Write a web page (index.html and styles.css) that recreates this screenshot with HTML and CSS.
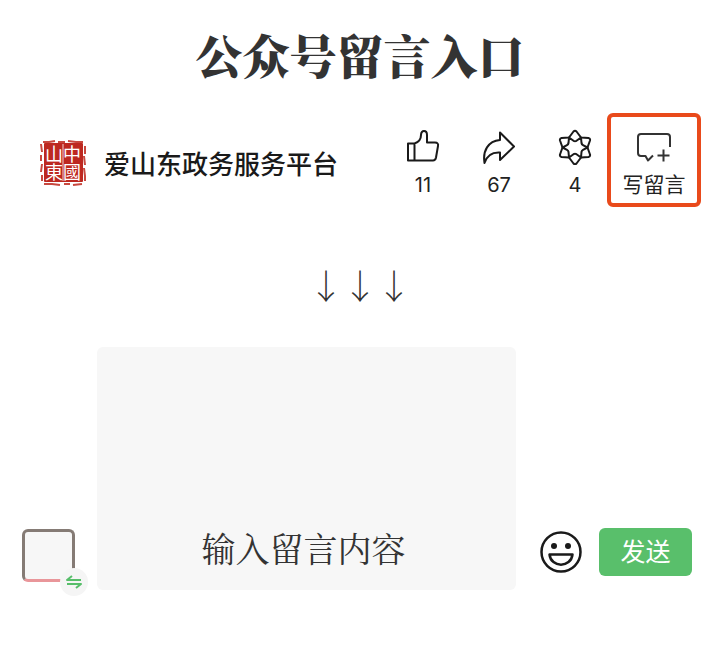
FILE: index.html
```
<!DOCTYPE html>
<html lang="zh-CN">
<head>
  <meta charset="UTF-8">
  <meta name="viewport" content="width=device-width, initial-scale=1.0">
  <title>公众号留言入口</title>
  <link rel="stylesheet" href="styles.css">
</head>
<body>
  <h1>公众号留言入口</h1>

  <div class="account">
    <div class="seal">
      <svg viewBox="0 0 46 46">
        <path class="seal-red" d="M5 4H42V41H5Z"/>
        <path class="seal-edge" d="M3 2H9L15 1M18 2H25M28 1L36 2H43M45 6V14M44 16L45 25M44 28L45 36V41M42 44L33 45M30 44H24M20 45L12 44H4M2 41V35M1 32L2 24M1 21V15M2 12L1 4"/>
        <path class="seal-line" d="M23 4V41"/>
      </svg>
      <span class="seal-text">中國山東</span>
    </div>
    <span class="name">爱山东政务服务平台</span>
    <div class="actions">
      <button class="action" type="button" aria-label="赞">
        <svg class="icon" viewBox="0 0 36 36">
          <path d="M3 14.500H9.500V31.500H3ZM9.500 14.500C14 13 16 11 16 6C16 .5 22 1 22 6V13.500H30C32.500 13.500 33.500 15 33 17L31 28.500C30.600 30.500 29.500 31.500 28 31.500H9.500"/>
        </svg>
        <span>11</span>
      </button>
      <button class="action" type="button" aria-label="分享">
        <svg class="icon" viewBox="0 0 36 36">
          <path d="M19 3.500L33 17.500L19 31V23.500C11 23 6 26 3.500 34C1.500 22 7 12 19 11Z"/>
        </svg>
        <span>67</span>
      </button>
      <button class="action" type="button" aria-label="推荐">
        <svg class="icon" viewBox="0 0 36 36">
          <path d="M12 8.500L16.500 2.500Q18 1 19.500 2.500L24 8.500L31.500 9Q33.500 9.500 33 11.500L30.500 18.500L33 25.500Q33.500 27.500 31.500 28L24 28.500L19.500 34.500Q18 36 16.500 34.500L12 28.500L4.500 28Q2.500 27.500 3 25.500L5.500 18.500L3 11.500Q2.500 9.500 4.500 9Z"/>
          <path d="M12 8.500L16.500 11.800Q18 12.500 19.500 11.800L24 8.500L24.500 14Q24.700 15.500 26 16.200L30.500 18.500L26 20.800Q24.700 21.500 24.500 23L24 28.500L19.500 25.200Q18 24.500 16.500 25.200L12 28.500L11.500 23Q11.300 21.500 10 20.800L5.500 18.500L10 16.200Q11.300 15.500 11.500 14Z"/>
        </svg>
        <span>4</span>
      </button>
    </div>
    <button class="write" type="button">
      <svg class="icon" viewBox="0 0 36 36">
        <path d="M34 18V8Q34 5 31 5H5Q2 5 2 8V24Q2 27 5 27H9.500L12 31.500L17 26.500M27.500 20.500V32.500M21.500 26.500H33.500"/>
      </svg>
      <span>写留言</span>
    </button>
  </div>

  <div class="arrows">↓↓↓</div>

  <form class="composer">
    <div class="avatar">
      <button class="switch" type="button" aria-label="切换身份">
        <svg viewBox="0 0 16 14">
          <path d="M6 1L1 5H15M1 9H15L10 13"/>
        </svg>
      </button>
    </div>
    <textarea class="message" aria-label="留言内容" placeholder="输入留言内容"></textarea>
    <button class="emoji" type="button" aria-label="表情">
      <svg viewBox="0 0 42 42">
        <circle cx="21" cy="21" r="19.500"/>
        <circle class="eye" cx="14" cy="15" r="3"/>
        <circle class="eye" cx="28" cy="15" r="3"/>
        <path d="M9.500 23.500H32.500C31 37 11 37 9.500 23.500Z"/>
      </svg>
    </button>
    <button class="send" type="button">发送</button>
  </form>
</body>
</html>
```
FILE: styles.css
```
* {
  box-sizing: border-box;
}
body {
  margin: 0;
  padding: 26px 0 40px;
  background: #fff;
  color: #333;
  font-family: "Noto Sans CJK SC", sans-serif;
}
button {
  margin: 0;
  padding: 0;
  border: none;
  background: none;
  color: #222;
  font-family: Inter, "Noto Sans CJK SC", sans-serif;
  cursor: pointer;
}
svg {
  display: block;
  fill: none;
  stroke: #1a1a1a;
  stroke-width: 2;
  stroke-linejoin: round;
}
h1 {
  margin: 0 0 31px;
  text-align: center;
  font-family: "Noto Serif CJK SC", "Noto Sans CJK SC", serif;
  font-size: 47px;
  line-height: 56px;
  font-weight: 900;
}

/* account row */
.account {
  display: flex;
  align-items: center;
  padding: 0 19px 0 40px;
}
.seal {
  position: relative;
  width: 46px;
  height: 46px;
  margin: 6px 18px 0 0;
}
.seal-red {
  fill: #bd2820;
  stroke: #bd2820;
}
.seal-edge {
  stroke: #c8483f;
}
.seal-line {
  stroke: #f3d5d0;
  stroke-width: 1;
}
.seal-text {
  position: absolute;
  top: 5px;
  left: 5px;
  width: 36px;
  height: 36px;
  writing-mode: vertical-rl;
  color: #fff;
  font-size: 18px;
  line-height: 18px;
  font-weight: 400;
}
.name {
  margin-top: 6px;
  color: #1a1a1a;
  font-size: 26px;
  line-height: 36px;
  font-weight: 500;
  white-space: nowrap;
}
.actions {
  display: flex;
  gap: 12px;
  margin-left: auto;
}
.action {
  width: 64px;
  padding-top: 8px;
}
.icon {
  width: 36px;
  height: 36px;
  margin: 0 auto 6px;
}
.action span,
.write span {
  display: block;
  font-size: 20px;
  line-height: 28px;
}
.write {
  width: 94px;
  height: 94px;
  padding-top: 8px;
  border: 4px solid #e94a1b;
  border-radius: 6px;
}
.write .icon {
  stroke: #333;
}
.write span {
  font-size: 21px;
}

.arrows {
  margin: 58px 0 42px;
  text-align: center;
  font-family: "Noto Serif CJK SC", "Noto Sans CJK SC", serif;
  font-size: 34px;
  line-height: 40px;
}

/* message box */
.composer {
  display: flex;
  align-items: flex-end;
  padding: 0 28px 0 22px;
}
.avatar {
  position: relative;
  width: 53px;
  height: 53px;
  margin: 0 22px 8px 0;
  border: 3px solid #857b75;
  border-bottom-color: #e9969a;
  border-radius: 6px;
  background: #f7f7f7;
}
.switch {
  position: absolute;
  right: -16px;
  bottom: -17px;
  width: 28px;
  height: 28px;
  border-radius: 50%;
  background: #f5f5f5;
}
.switch svg {
  width: 16px;
  height: 14px;
  margin: 0 auto;
  stroke: #57be6a;
}
.message {
  flex: 1;
  min-width: 0;
  height: 243px;
  padding: 176px 20px 16px 14px;
  border: none;
  border-radius: 6px;
  background: #f7f7f7;
  color: #333;
  font-family: "Noto Serif CJK SC", "Noto Sans CJK SC", serif;
  font-size: 34px;
  line-height: 49px;
  text-align: center;
  resize: none;
}
.message::placeholder {
  color: #333;
  opacity: 1;
}
.emoji {
  margin: 0 17px 17px 24px;
}
.emoji svg {
  width: 42px;
  height: 42px;
  stroke-width: 2.500;
}
.emoji .eye {
  fill: #1a1a1a;
  stroke: none;
}
.send {
  width: 93px;
  height: 48px;
  margin-bottom: 14px;
  border-radius: 6px;
  background: #59bf6b;
  color: #fff;
  font-size: 25px;
  line-height: 36px;
}
```
